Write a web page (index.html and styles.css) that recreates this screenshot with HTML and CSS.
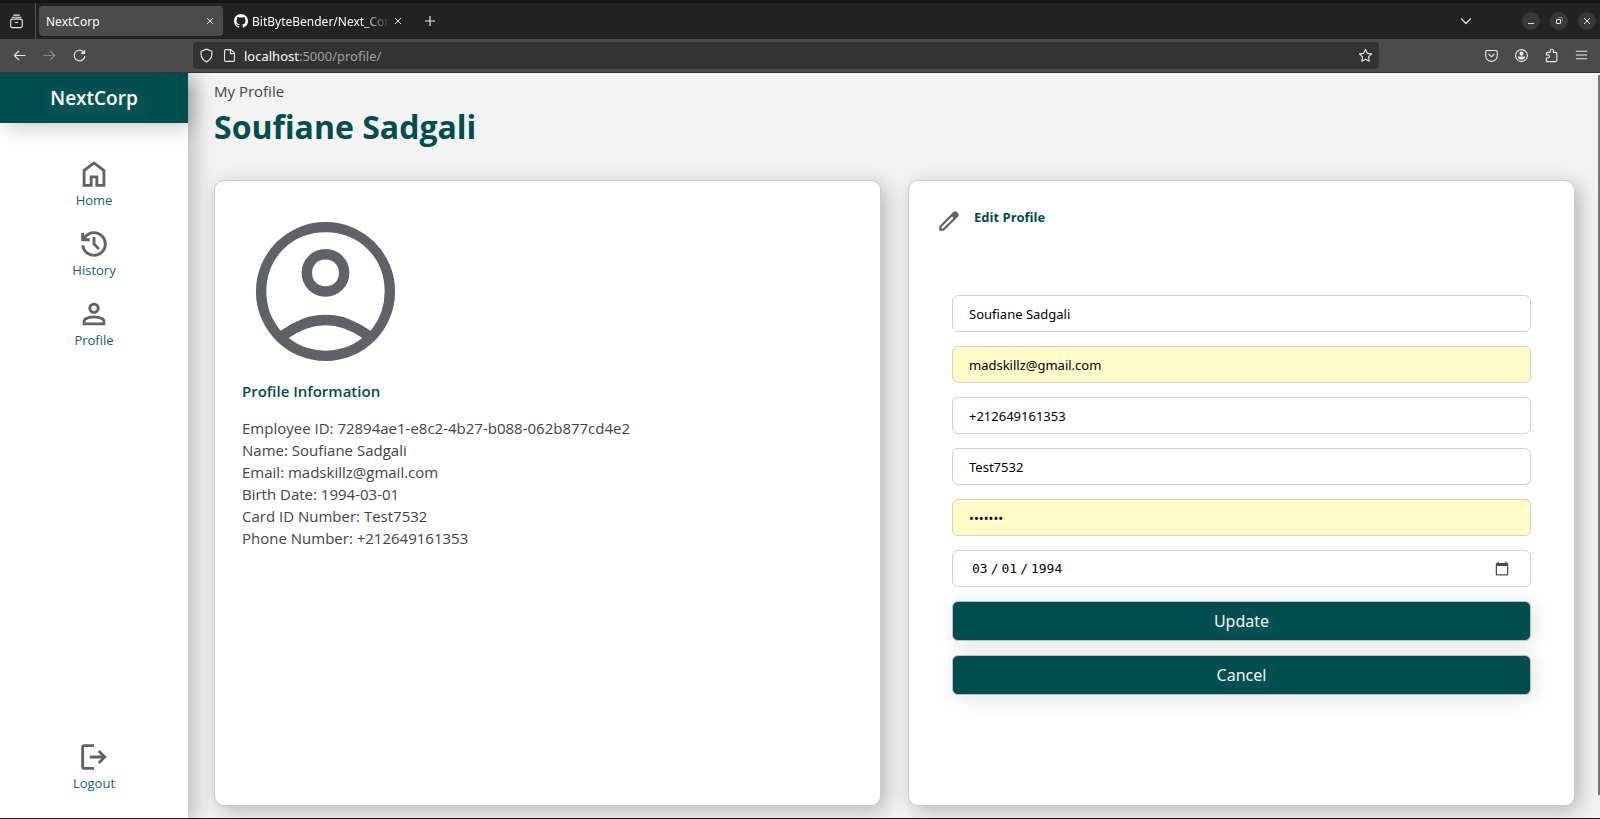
FILE: index.html
```
<!DOCTYPE html>
<html lang="en">
<head>
<meta charset="utf-8">
<title>NextCorp</title>
<link rel="stylesheet" href="styles.css">
</head>
<body>
<header class="browser">
  <div class="tabbar">
    <button class="tool view" aria-label="Firefox View">
      <svg class="ic" viewBox="0 0 16 16"><rect x="1.8" y="5.5" width="12.4" height="9" rx="1.6"/><path d="M2.8 3.4h10.4M4.5 1.2h7M6.2 9h3.6"/></svg>
    </button>
    <div class="tab active">
      <span class="tab-title">NextCorp</span>
      <button class="close" aria-label="Close tab"><svg viewBox="0 0 8 8"><path d="M1 1l6 6M7 1L1 7"/></svg></button>
    </div>
    <div class="tab">
      <svg class="github" viewBox="0 0 16 16"><path d="M8 0C3.58 0 0 3.58 0 8c0 3.54 2.29 6.53 5.47 7.59.4.07.55-.17.55-.38 0-.19-.01-.82-.01-1.49-2.01.37-2.53-.49-2.69-.94-.09-.23-.48-.94-.82-1.13-.28-.15-.68-.52-.01-.53.63-.01 1.08.58 1.23.82.72 1.21 1.87.87 2.33.66.07-.52.28-.87.51-1.07-1.78-.2-3.64-.89-3.64-3.95 0-.87.31-1.59.82-2.15-.08-.2-.36-1.02.08-2.12 0 0 .67-.21 2.2.82.64-.18 1.32-.27 2-.27s1.36.09 2 .27c1.53-1.04 2.2-.82 2.2-.82.44 1.1.16 1.92.08 2.12.51.56.82 1.27.82 2.15 0 3.07-1.87 3.75-3.65 3.95.29.25.54.73.54 1.48 0 1.07-.01 1.93-.01 2.2 0 .21.15.46.55.38A8.01 8.01 0 0 0 16 8c0-4.42-3.58-8-8-8z"/></svg>
      <span class="tab-title fade">BitByteBender/Next_Cor</span>
      <button class="close" aria-label="Close tab"><svg viewBox="0 0 8 8"><path d="M1 1l6 6M7 1L1 7"/></svg></button>
    </div>
    <button class="tool" aria-label="New tab"><svg class="ic small" viewBox="0 0 10 10"><path d="M5 0v10M0 5h10"/></svg></button>
    <div class="window-controls">
      <button class="tool chevron" aria-label="List all tabs"><svg class="ic small" viewBox="0 0 10 10"><path d="M0 2.5l5 5 5-5"/></svg></button>
      <button class="win" aria-label="Minimize"><svg viewBox="0 0 8 8"><path d="M1 6.5h6"/></svg></button>
      <button class="win" aria-label="Restore"><svg viewBox="0 0 8 8"><path d="M1.500 2.500h4v4h-4z"/><path class="dim" d="M3 .5h4.500v4.500"/></svg></button>
      <button class="win" aria-label="Close"><svg viewBox="0 0 8 8"><path d="M1 1l6 6M7 1L1 7"/></svg></button>
    </div>
  </div>
  <div class="toolbar">
    <button class="tool" aria-label="Back"><svg class="ic" viewBox="0 0 16 16"><path d="M14.500 8h-12M7.500 3l-5 5 5 5"/></svg></button>
    <button class="tool off" aria-label="Forward"><svg class="ic" viewBox="0 0 16 16"><path d="M1.500 8h12M8.500 3l5 5-5 5"/></svg></button>
    <button class="tool" aria-label="Reload"><svg class="ic" viewBox="0 0 16 16"><path d="M13.700 8.500a5.700 5.700 0 1 1-1.800-4.700"/><path class="solid" d="M14 1.500v5H9z"/></svg></button>
    <div class="urlbar">
      <svg class="ic" viewBox="0 0 16 16"><path d="M8 1.200l5.800 2.300v2.700c0 3.800-2.300 7-5.800 8.600-3.500-1.600-5.800-4.800-5.800-8.600V3.500z"/></svg>
      <svg class="ic page" viewBox="0 0 16 16"><path d="M4 1.700h5.500l3.800 3.800v7.500a1.300 1.300 0 0 1-1.300 1.300H4a1.300 1.300 0 0 1-1.300-1.300V3A1.300 1.300 0 0 1 4 1.700zM9 2v4h4"/></svg>
      <span class="url">localhost<span class="path">:5000/profile/</span></span>
      <svg class="ic star" viewBox="0 0 16 16"><path d="M8 1.500l2 4.200 4.500.6-3.300 3.200.8 4.600L8 11.900l-4 2.200.8-4.600L1.500 6.300 6 5.700z"/></svg>
    </div>
    <button class="tool" aria-label="Pocket"><svg class="ic" viewBox="0 0 16 16"><path d="M3 2.700h10a1.200 1.200 0 0 1 1.200 1.200V8A6.200 6.200 0 0 1 1.800 8V3.900A1.200 1.200 0 0 1 3 2.700zM4.800 6.300L8 9.300l3.200-3"/></svg></button>
    <button class="tool" aria-label="Account"><svg class="ic" viewBox="0 0 16 16"><circle cx="8" cy="8" r="6.300"/><circle class="solid" cx="8" cy="6" r="2.200"/><path class="solid" d="M4 9h8c-.3 2.300-2 3.300-4 3.300S4.300 11.300 4 9z"/></svg></button>
    <button class="tool" aria-label="Extensions"><svg class="ic" viewBox="0 0 16 16"><path d="M2.500 14.500h10a1.200 1.200 0 0 0 1.200-1.200V5.800a1.200 1.200 0 0 0-1.200-1.200H10V3a1.700 1.700 0 0 0-3.400 0v1.600H3.700a1.200 1.200 0 0 0-1.200 1.200v1.500h1.700a1.700 1.700 0 0 1 0 3.400H2.500z"/></svg></button>
    <button class="tool" aria-label="Menu"><svg class="ic" viewBox="0 0 16 16"><path d="M2 3.500h12M2 7.500h12M2 11.500h12"/></svg></button>
  </div>
</header>

<div class="app">
  <aside class="sidebar">
    <div class="brand">NextCorp</div>
    <nav class="nav">
      <a class="nav-item" href="#"><svg class="glyph" viewBox="0 -960 960 960"><path d="M240-200h120v-240h240v240h120v-360L480-740 240-560v360Zm-80 80v-480l320-240 320 240v480H520v-240h-80v240H160Z"/></svg>Home</a>
      <a class="nav-item" href="#"><svg class="glyph" viewBox="0 -960 960 960"><path d="M480-120q-138 0-240.500-91.500T122-440h82q14 104 92.500 172T480-200q117 0 198.500-81.500T760-480q0-117-81.500-198.500T480-760q-69 0-129 32t-101 88h110v80H120v-240h80v94q51-64 124.500-99T480-840q75 0 140.500 28.500t114 77q48.500 48.500 77 114T840-480q0 75-28.500 140.500t-77 114q-48.500 48.500-114 77T480-120Zm112-192L440-464v-216h80v184l128 128-56 56Z"/></svg>History</a>
      <a class="nav-item" href="#"><svg class="glyph" viewBox="0 -960 960 960"><path d="M480-480q-66 0-113-47t-47-113q0-66 47-113t113-47q66 0 113 47t47 113q0 66-47 113t-113 47ZM160-160v-112q0-34 17.500-62.500T224-378q62-31 126-46.500T480-440q66 0 130 15.500T736-378q29 15 46.500 43.500T800-272v112H160Zm80-80h480v-32q0-11-5.500-20T700-306q-54-27-109-40.500T480-360q-56 0-111 13.500T260-306q-9 5-14.500 14t-5.500 20v32Zm240-320q33 0 56.500-23.500T560-640q0-33-23.500-56.500T480-720q-33 0-56.500 23.500T400-640q0 33 23.500 56.500T480-560Z"/></svg>Profile</a>
      <a class="nav-item logout" href="#"><svg class="glyph" viewBox="0 -960 960 960"><path d="M200-120q-33 0-56.500-23.500T120-200v-560q0-33 23.500-56.500T200-840h280v80H200v560h280v80H200Zm440-160-55-58 102-102H360v-80h327L585-622l55-58 200 200-200 200Z"/></svg>Logout</a>
    </nav>
  </aside>

  <main class="main">
    <p class="eyebrow">My Profile</p>
    <h1 class="name">Soufiane Sadgali</h1>
    <div class="cards">
      <section class="card">
        <svg class="avatar" viewBox="0 -960 960 960"><path d="M222-255q63-44 125-67.500T480-346q71 0 133.500 23.500T739-255q44-54 62.500-109T820-480q0-145-97.500-242.500T480-820q-145 0-242.500 97.500T140-480q0 61 19 116t63 109Zm257.814-195Q422-450 382.500-489.686q-39.500-39.686-39.500-97.500t39.686-97.314q39.686-39.500 97.500-39.500t97.314 39.686q39.500 39.686 39.500 97.500T577.314-489.500q-39.686 39.500-97.500 39.500Zm.654 370Q398-80 325-111.500q-73-31.500-127.500-86t-86-127.266Q80-397.532 80-480.266T111.500-635.500q31.500-72.500 86-127t127.266-86q72.766-31.500 155.500-31.500T635.500-848.500q72.500 31.500 127 86t86 127.032q31.500 72.532 31.500 155T848.500-325q-31.500 73-86 127.500t-127.032 86q-72.532 31.500-155 31.500ZM480-140q55 0 107.500-16T691-212q-51-36-104-55t-107-19q-54 0-107 19t-104 55q51 40 103.500 56T480-140Zm0-370q34 0 55.500-21.500T557-587q0-34-21.500-55.500T480-664q-34 0-55.500 21.500T403-587q0 34 21.500 55.500T480-510Z"/></svg>
        <h2 class="info-title">Profile Information</h2>
        <div class="info">
          <p>Employee ID: 72894ae1-e8c2-4b27-b088-062b877cd4e2</p>
          <p>Name: Soufiane Sadgali</p>
          <p>Email: madskillz@gmail.com</p>
          <p>Birth Date: 1994-03-01</p>
          <p>Card ID Number: Test7532</p>
          <p>Phone Number: +212649161353</p>
        </div>
      </section>
      <section class="card">
        <div class="edit-head">
          <svg class="pencil" viewBox="0 -960 960 960"><path d="M200-200h57l391-391-57-57-391 391v57Zm-80 80v-170l528-527q12-11 26.500-17t30.500-6q16 0 31 6t26 18l55 56q12 11 17.500 26t5.500 30q0 16-5.500 30.500T817-647L290-120H120Z"/></svg>
          <h2 class="edit-title">Edit Profile</h2>
        </div>
        <form class="form">
          <input class="field" type="text" aria-label="Name" value="Soufiane Sadgali">
          <input class="field filled" type="email" aria-label="Email" value="madskillz@gmail.com">
          <input class="field" type="tel" aria-label="Phone number" value="+212649161353">
          <input class="field" type="text" aria-label="Card ID number" value="Test7532">
          <input class="field filled" type="password" aria-label="Password" value="madskil">
          <input class="field date" type="date" aria-label="Birth date" value="1994-03-01">
          <button class="btn" type="button">Update</button>
          <button class="btn" type="button">Cancel</button>
        </form>
      </section>
    </div>
  </main>
  <div class="scroll-thumb"></div>
</div>
</body>
</html>
```
FILE: styles.css
```
* { box-sizing: border-box; margin: 0; padding: 0; }

:root {
  --teal: #004d4d;
  --ui: "Noto Sans", sans-serif;
  --text: "Open Sans", sans-serif;
}

body {
  display: flex;
  flex-direction: column;
  min-height: 100vh;
  background: #f3f3f3;
  border-bottom: 1px solid #1a1a1a;
  font-family: var(--text);
  font-size: 15px;
  color: #444;
}

button { border: 0; background: none; font: inherit; color: inherit; }

/* Browser chrome */
.browser { font-family: var(--ui); font-size: 12px; color: #fbfbfe; }
.tabbar {
  display: flex;
  align-items: center;
  height: 39px;
  border-top: 3px solid #151515;
  background: #222;
}
.toolbar {
  display: flex;
  align-items: center;
  height: 34px;
  padding: 0 4px;
  border-bottom: 1px solid #333;
  background: #4b4b4b;
}
.tool { display: flex; align-items: center; justify-content: center; width: 30px; height: 30px; }
.tool.off { opacity: .4; }
.ic { width: 15px; height: 15px; flex: none; fill: none; stroke: #e8e8e8; stroke-width: 1.2; stroke-linejoin: round; }
.ic .solid { fill: #e8e8e8; stroke: none; }
.ic.small { width: 10px; height: 10px; }
.view { width: 36px; height: 36px; padding-right: 2px; border-right: 1px solid #555; margin-right: 3px; }
.tab {
  display: flex;
  align-items: center;
  width: 184px;
  height: 30px;
  margin-right: 4px;
  padding: 0 9px 0 7px;
  border-radius: 4px;
}
.tab.active { background: #4b4b4b; }
.tab-title { flex: 1; overflow: hidden; white-space: nowrap; }
.fade { -webkit-mask-image: linear-gradient(to right, #000 80%, transparent); mask-image: linear-gradient(to right, #000 80%, transparent); }
.github { flex: none; width: 14px; height: 14px; margin-right: 4px; fill: #fff; }
.close { display: flex; padding-left: 4px; }
.close svg, .win svg { width: 8px; height: 8px; fill: none; stroke: #e0e0e0; stroke-width: 1; }
.window-controls { display: flex; align-items: center; gap: 10px; margin-left: auto; padding-right: 4px; }
.chevron { margin-right: 31px; }
.win { display: flex; align-items: center; justify-content: center; width: 18px; height: 18px; border-radius: 50%; background: #383838; }
.win .dim { stroke: #777; }
.urlbar {
  display: flex;
  flex: 1;
  align-items: center;
  height: 27px;
  margin: 0 97px 0 99px;
  padding: 0 6px;
  border-radius: 4px;
  background: #333;
  font-size: 13px;
}
.page { margin: 0 7px 0 8px; }
.url { flex: 1; }
.path { color: #a0a0a0; }

/* Application */
.app { position: relative; display: flex; flex: 1; }
.sidebar {
  display: flex;
  flex-direction: column;
  width: 188px;
  background: #fff;
  box-shadow: 5px 5px 20px rgba(0, 0, 0, .25);
  clip-path: inset(0 -40px 0 0);
}
.brand {
  height: 50px;
  background: var(--teal);
  box-shadow: 5px 5px 20px rgba(0, 0, 0, .2);
  color: #fff;
  font-size: 19px;
  font-weight: 600;
  line-height: 50px;
  text-align: center;
  text-shadow: 4px 4px 20px rgba(255, 255, 255, .3);
}
.nav { display: flex; flex: 1; flex-direction: column; gap: 18px; padding: 34px 0 26px; }
.nav-item {
  display: flex;
  flex-direction: column;
  align-items: center;
  color: #12636a;
  font-size: 13px;
  line-height: 18px;
  text-decoration: none;
}
.glyph { width: 34px; height: 34px; fill: #5f6368; }
.logout { margin-top: auto; }

.main { display: flex; flex: 1; flex-direction: column; padding: 8px 25px 12px 26px; }
.eyebrow { line-height: 20px; }
.name { margin-bottom: 28px; color: var(--teal); font-size: 32px; line-height: 51px; }
.cards { display: grid; flex: 1; grid-template-columns: 1fr 1fr; gap: 27px; }
.card {
  padding: 27px;
  border: 1px solid #ccc;
  border-radius: 10px;
  background: #fff;
  box-shadow: 5px 5px 20px rgba(0, 0, 0, .25);
}
.avatar { display: block; width: 167px; height: 167px; fill: #5f6368; }
.info-title { margin: 4px 0 13px; color: var(--teal); font-size: 15px; font-weight: 600; line-height: 24px; }
.info p { line-height: 22px; }
.info { padding-top: 1px; }

.edit-head { display: flex; align-items: flex-start; gap: 12px; height: 87px; }
.pencil { width: 26px; height: 26px; fill: #5f6368; }
.edit-title { color: var(--teal); font-size: 13px; font-weight: 700; line-height: 18px; }
.form { display: flex; flex-direction: column; gap: 14px; padding: 0 16px; }
.field {
  width: 100%;
  height: 37px;
  padding: 0 16px;
  border: 1px solid #d2d2d2;
  border-radius: 6px;
  background: #fff;
  color: #000;
  font: 13px var(--ui);
}
.filled { background: #fffbc8; }
.date { padding: 0 20px 0 18px; font-family: "DejaVu Sans Mono", monospace; }
.date::-webkit-datetime-edit-text { padding: 0 2px; }
.date::-webkit-calendar-picker-indicator { width: 16px; height: 16px; padding: 0; opacity: .7; }
.btn {
  height: 40px;
  border: 1px solid #b8c4c4;
  border-radius: 6px;
  background: var(--teal);
  box-shadow: 3px 3px 20px rgba(0, 0, 0, .12);
  color: #f3f3f3;
  font: 16px var(--ui);
  text-shadow: 4px 4px 12px rgba(255, 255, 255, .2);
}

.scroll-thumb { position: absolute; top: 2px; right: 0; bottom: 23px; width: 2px; background: #777; }
```
